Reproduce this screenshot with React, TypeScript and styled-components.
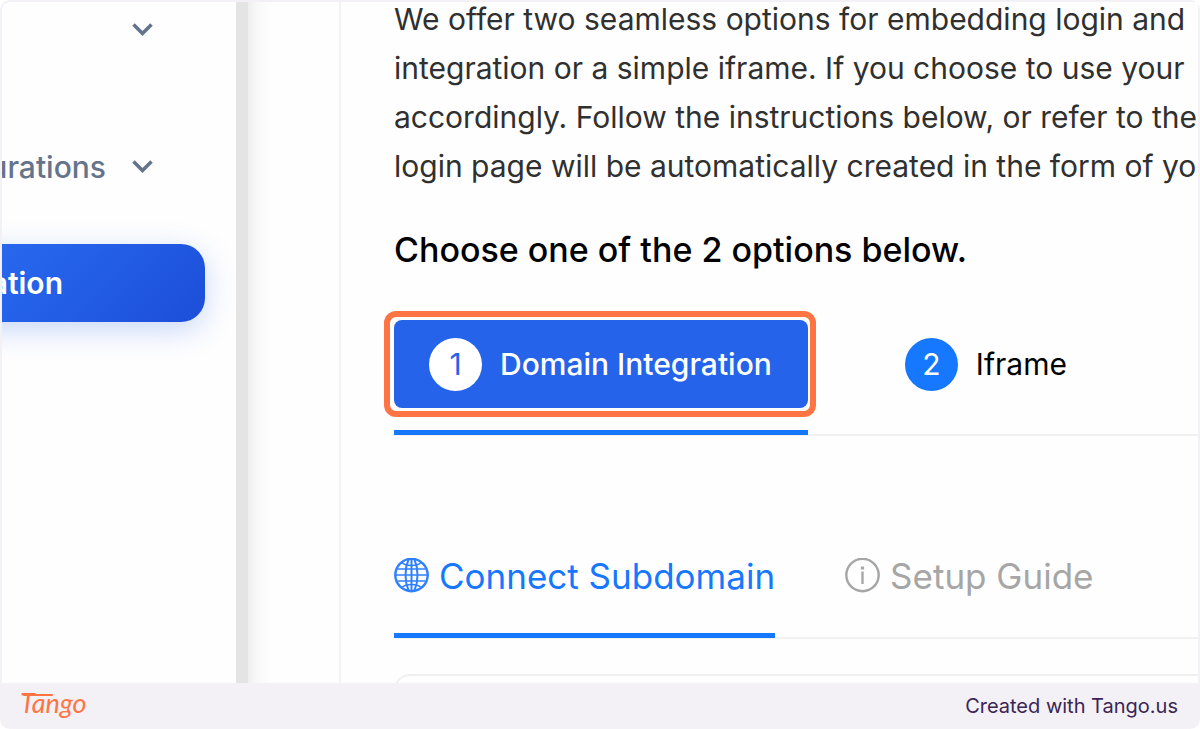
import React from "react";
import styled, { createGlobalStyle } from "styled-components";

const GlobalStyle = createGlobalStyle`
  *, *::before, *::after { box-sizing: border-box; }
  body { margin: 0; background: #ffffff; font-family: "Inter", "Open Sans", sans-serif; }
  h2, p { margin: 0; font-weight: inherit; }
  button { margin: 0; padding: 0; border: 0; background: none; font: inherit; color: inherit; cursor: pointer; }
  svg { display: block; flex: none; }
`;

const Frame = styled.div`
  display: flex;
  flex-direction: column;
  height: 100vh;
  padding: 2px 2px 0;
  overflow: hidden;
  border-radius: 10px;
  background: #f3f1f6;
`;

const Capture = styled.div`
  display: flex;
  flex: 1;
  min-height: 0;
  overflow: hidden;
  border-radius: 8px 0 0 0;
  background: #fefefe;
`;

const Sidebar = styled.nav`
  display: flex;
  flex: none;
  flex-direction: column;
  align-items: flex-end;
  width: 234px;
  overflow: hidden;
`;

const SideItem = styled.button<{ $spaced?: boolean }>`
  display: flex;
  flex: none;
  align-items: center;
  justify-content: flex-end;
  gap: 26px;
  height: 56px;
  margin-bottom: ${(p) => (p.$spaced ? 81 : 49)}px;
  padding-right: 82px;
  color: #64748b;
  font-size: 30px;
  font-weight: 500;
`;

const SideCurrent = styled.button`
  flex: none;
  width: 320px;
  height: 78px;
  margin-right: 31px;
  padding-right: 142px;
  border-radius: 24px;
  background: linear-gradient(135deg, #2f6fee 0%, #2563eb 45%, #1d4ed8 100%);
  box-shadow: 0 8px 30px rgba(37, 99, 235, 0.25);
  color: #ffffff;
  font-size: 30px;
  font-weight: 600;
  text-align: right;
`;

const Scrollbar = styled.div`
  flex: none;
  width: 12px;
  background: #e4e4e4;
`;

const Gutter = styled.div`
  flex: none;
  width: 91px;
  background: linear-gradient(90deg, #efefef 0, #f9f9f9 10px, #fefefe 24px);
`;

const Main = styled.main`
  flex: 1;
  min-width: 0;
  padding-left: 53px;
  overflow: hidden;
  border-left: 2px solid #f2f2f2;
`;

const Intro = styled.p`
  margin-top: -7px;
  color: #303030;
  font-size: 30px;
  font-weight: 400;
  line-height: 49px;
  white-space: nowrap;
`;

const Heading = styled.h2`
  margin: 37px 0 48px;
  color: #000000;
  font-size: 34px;
  font-weight: 500;
  line-height: 44px;
  white-space: nowrap;
`;

const Tabs = styled.div<{ $gap: number }>`
  display: flex;
  gap: ${(p) => p.$gap}px;
  border-bottom: 2px solid #f1f1f1;
  white-space: nowrap;
`;

const TabSlot = styled.div<{ $active?: boolean; $space: number }>`
  position: relative;
  margin-bottom: -1px;
  padding-bottom: ${(p) => p.$space}px;
  border-bottom: 5px solid ${(p) => (p.$active ? "#1677ff" : "transparent")};
`;

const StepTab = styled.button<{ $active?: boolean }>`
  display: flex;
  align-items: center;
  gap: 18px;
  height: 88px;
  padding: 0 36px 0 35px;
  border-radius: 8px;
  background: ${(p) => (p.$active ? "#2563eb" : "transparent")};
  color: ${(p) => (p.$active ? "#ffffff" : "#000000")};
  font-size: 30px;
  font-weight: ${(p) => (p.$active ? 500 : 400)};
`;

const StepNumber = styled.span<{ $active?: boolean }>`
  display: grid;
  place-items: center;
  width: 53px;
  height: 53px;
  border-radius: 50%;
  background: ${(p) => (p.$active ? "#ffffff" : "#1677ff")};
  color: ${(p) => (p.$active ? "#2563eb" : "#ffffff")};
  font-weight: 400;
`;

const Highlight = styled.span`
  position: absolute;
  top: -9px;
  right: -8px;
  left: -10px;
  height: 106px;
  border: 6px solid #ff7442;
  border-radius: 12px;
  pointer-events: none;
`;

const GuideTabs = styled(Tabs)`
  margin-top: 118px;
`;

const GuideTab = styled.button<{ $active?: boolean }>`
  display: flex;
  align-items: center;
  gap: 9px;
  height: 44px;
  color: ${(p) => (p.$active ? "#1677ff" : "#a6a6a6")};
  font-size: 35px;
  font-weight: 400;
`;

const Card = styled.section`
  height: 80px;
  margin-top: 35px;
  border: 2px solid #f0f0f0;
  border-right: 0;
  border-radius: 16px 0 0 0;
`;

const Footer = styled.footer`
  display: flex;
  flex: none;
  align-items: center;
  justify-content: space-between;
  height: 46px;
  padding: 0 20px 0 16px;
  color: #3b2555;
  font-size: 20px;
`;

const Chevron = () => (
  <svg width="22" height="16" viewBox="0 0 22 16" fill="none" stroke="#64748b" strokeWidth="3.6" aria-hidden="true">
    <path d="M1.500 2.500l9 9 9-9" />
  </svg>
);

const GlobeIcon = () => (
  <svg width="36" height="36" viewBox="0 0 36 36" fill="none" stroke="#2f80ff" strokeWidth="2" aria-hidden="true">
    <circle cx="17.500" cy="17" r="16.2" strokeWidth="2.4" />
    <path d="M14.500 1.500C10.500 11 10.500 23 14.500 32.500M20.500 1.500C24.500 11 24.500 23 20.500 32.500M17.500 1v32" />
    <path d="M8 4.500C12 8.500 23 8.500 27 4.500M8 29.500C12 25.500 23 25.500 27 29.500M1.500 17h32M3.500 11h28M3.500 23h28" strokeWidth="1.6" />
  </svg>
);

const InfoIcon = () => (
  <svg width="36" height="36" viewBox="0 0 36 36" fill="none" stroke="#a6a6a6" strokeWidth="2.4" aria-hidden="true">
    <circle cx="17.500" cy="17" r="16.2" />
    <path d="M17.500 13.500v12.500" />
    <path d="M17.500 8.500v3" strokeWidth="3.2" />
  </svg>
);

const TangoLogo = () => (
  <svg width="84" height="44" viewBox="0 0 84 44" role="img" aria-label="Tango">
    <text x="2" y="29" fill="#ff7442" fontFamily="Lato, sans-serif" fontSize="27" fontStyle="italic" fontWeight="400">
      Tango
    </text>
    <path d="M6 11h28" stroke="#ff7442" strokeWidth="2" strokeLinecap="round" />
  </svg>
);

export default function App() {
  return (
    <>
      <GlobalStyle />
      <Frame>
        <Capture>
          <Sidebar>
            <SideItem $spaced aria-label="Expand section">
              <Chevron />
            </SideItem>
            <SideItem>
              <span>Configurations</span>
              <Chevron />
            </SideItem>
            <SideCurrent>Integration</SideCurrent>
          </Sidebar>
          <Scrollbar />
          <Gutter />
          <Main>
            <Intro>
              We offer two seamless options for embedding login and
              <br />
              integration or a simple iframe. If you choose to use your
              <br />
              accordingly. Follow the instructions below, or refer to the
              <br />
              login page will be automatically created in the form of yo
            </Intro>
            <Heading>Choose one of the 2 options below.</Heading>
            <Tabs $gap={62} role="tablist">
              <TabSlot $active $space={22}>
                <StepTab $active role="tab" aria-selected="true">
                  <StepNumber $active>1</StepNumber>
                  Domain Integration
                </StepTab>
                <Highlight />
              </TabSlot>
              <TabSlot $space={22}>
                <StepTab role="tab" aria-selected="false">
                  <StepNumber>2</StepNumber>
                  Iframe
                </StepTab>
              </TabSlot>
            </Tabs>
            <GuideTabs $gap={70} role="tablist">
              <TabSlot $active $space={35}>
                <GuideTab $active role="tab" aria-selected="true">
                  <GlobeIcon />
                  Connect Subdomain
                </GuideTab>
              </TabSlot>
              <TabSlot $space={35}>
                <GuideTab role="tab" aria-selected="false">
                  <InfoIcon />
                  Setup Guide
                </GuideTab>
              </TabSlot>
            </GuideTabs>
            <Card />
          </Main>
        </Capture>
        <Footer>
          <TangoLogo />
          <span>Created with Tango.us</span>
        </Footer>
      </Frame>
    </>
  );
}
